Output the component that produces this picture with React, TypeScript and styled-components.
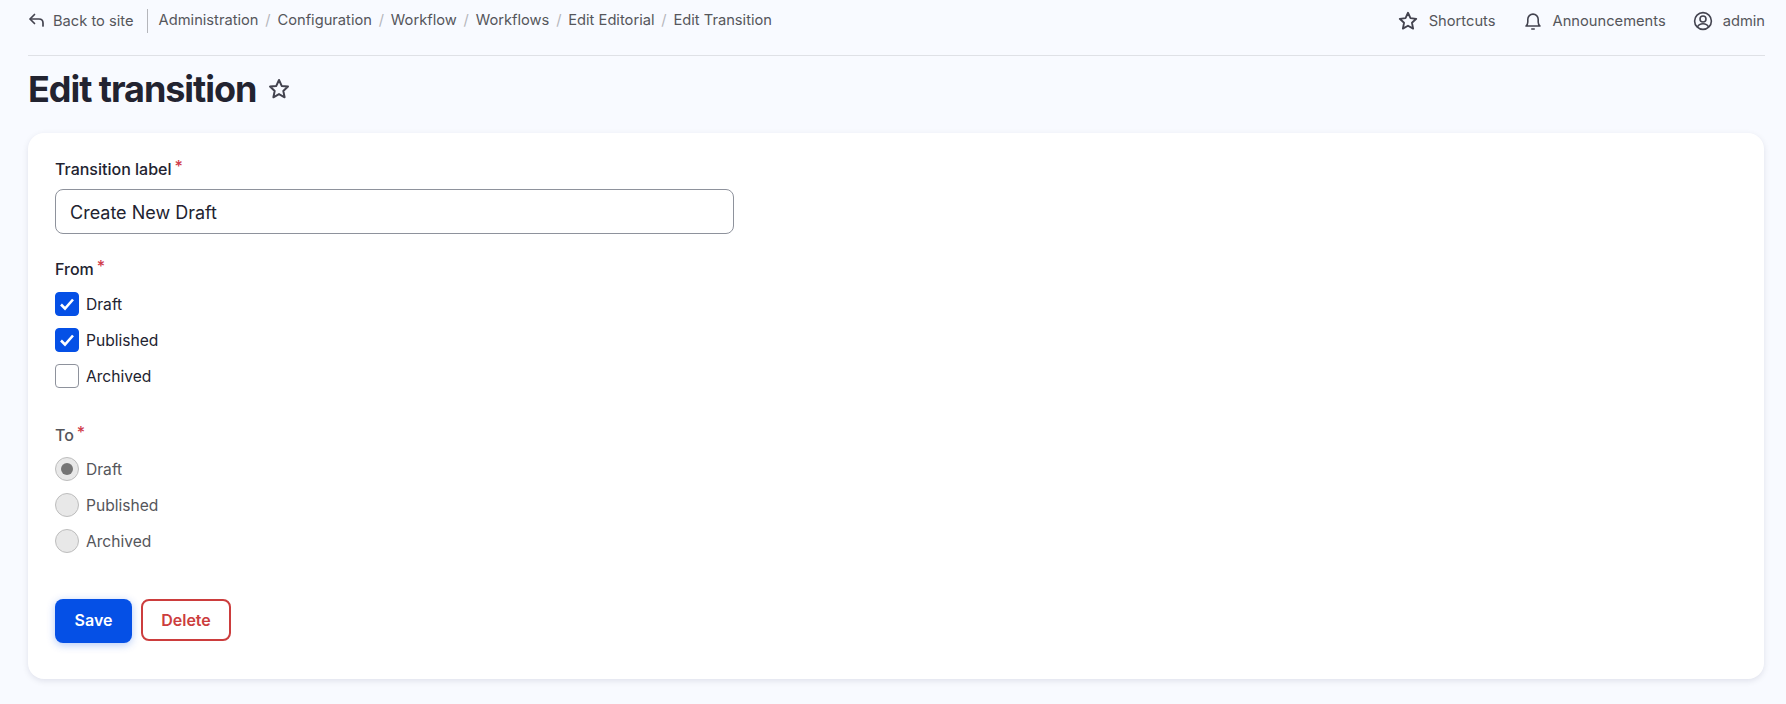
import React from 'react';
import styled, { createGlobalStyle } from 'styled-components';

const GlobalStyle = createGlobalStyle`
  html, body {
    margin: 0;
    padding: 0;
    background: #f8faff;
    font-family: Inter, "Liberation Sans", sans-serif;
    color: #222330;
  }
  * { box-sizing: border-box; }
`;

const StarIcon = ({ size = 20 }: { size?: number }) => (
  <svg width={size} height={size} viewBox="0 0 24 24" fill="none" stroke="#43434f" strokeWidth="2" strokeLinejoin="round">
    <path d="M12 3l2.700 5.900 6.300.7-4.700 4.300 1.300 6.400L12 17.100l-5.600 3.200 1.300-6.400L3 9.600l6.300-.7z" />
  </svg>
);

const CheckMark = () => (
  <svg width="18" height="18" viewBox="0 0 18 18" fill="none" stroke="#fff" strokeWidth="2.600">
    <path d="M3 9.500l4 4 8-9" />
  </svg>
);

export default function App() {
  const crumbs = ['Administration', 'Configuration', 'Workflow', 'Workflows', 'Edit Editorial', 'Edit Transition'];

  return (
    <Page>
      <GlobalStyle />
      <Toolbar>
        <BackLink>
          <svg width="18" height="18" viewBox="0 0 18 18" fill="none" stroke="#43434f" strokeWidth="1.700" strokeLinecap="round" strokeLinejoin="round">
            <path d="M6.500 2.500L2 7l4.500 4.500" />
            <path d="M2.500 7H11c2.500 0 4 1.600 4 4v3" />
          </svg>
          Back to site
        </BackLink>
        <Crumbs>
          {crumbs.map((c, i) => (
            <React.Fragment key={c}>
              {i > 0 && <Slash>/</Slash>}
              <span>{c}</span>
            </React.Fragment>
          ))}
        </Crumbs>
        <Tools>
          <Tool>
            <StarIcon size={22} />
            Shortcuts
          </Tool>
          <Tool>
            <svg width="20" height="20" viewBox="0 0 20 20" fill="none" stroke="#43434f" strokeWidth="1.600" strokeLinejoin="round" strokeLinecap="round">
              <path d="M3 15h14c-1.200-1-1.800-2.200-1.800-4V8.300a5.200 5.200 0 0 0-10.400 0V11c0 1.800-.6 3-1.800 4z" />
              <path d="M8.800 18h2.400" />
            </svg>
            Announcements
          </Tool>
          <Tool>
            <svg width="20" height="20" viewBox="0 0 20 20" fill="none" stroke="#43434f" strokeWidth="1.600">
              <circle cx="10" cy="10" r="8.400" />
              <circle cx="10" cy="8" r="3" />
              <path d="M4.500 16c1-2.300 3-3.200 5.500-3.200s4.500.9 5.500 3.200" />
            </svg>
            admin
          </Tool>
        </Tools>
      </Toolbar>

      <TitleRow>
        <Title>Edit transition</Title>
        <StarIcon size={24} />
      </TitleRow>

      <Card>
        <Label>Transition label<Req>*</Req></Label>
        <TextInput defaultValue="Create New Draft" />

        <GroupLabel>From<Req>*</Req></GroupLabel>
        <Options $top={12}>
          <Option><CheckBox $checked><CheckMark /></CheckBox>Draft</Option>
          <Option><CheckBox $checked><CheckMark /></CheckBox>Published</Option>
          <Option><CheckBox />Archived</Option>
        </Options>

        <GroupLabel $disabled $top={36}>To<Req>*</Req></GroupLabel>
        <Options>
          <Option $disabled><Radio $selected />Draft</Option>
          <Option $disabled><Radio />Published</Option>
          <Option $disabled><Radio />Archived</Option>
        </Options>

        <Actions>
          <SaveButton>Save</SaveButton>
          <DeleteButton>Delete</DeleteButton>
        </Actions>
      </Card>
    </Page>
  );
}

const Page = styled.div`
  width: 1786px;
  height: 704px;
  overflow: hidden;
  padding: 0 21px 0 28px;
`;

const Toolbar = styled.header`
  display: flex;
  align-items: center;
  height: 56px;
  padding-bottom: 14px;
  border-bottom: 1px solid #dfe1e6;
  font-size: 14.700px;
  color: #55565b;
`;

const BackLink = styled.div`
  display: flex;
  align-items: center;
  gap: 7px;
  height: 24px;
  padding-right: 13px;
  border-right: 1px solid #b5b6bb;
`;

const Crumbs = styled.nav`
  display: flex;
  align-items: center;
  margin-left: 11px;
  margin-top: -2px;
`;

const Slash = styled.span`
  margin: 0 6.800px;
  color: #b5b6bb;
`;

const Tools = styled.div`
  display: flex;
  align-items: center;
  gap: 27px;
  margin-left: auto;
`;

const Tool = styled.div`
  display: flex;
  align-items: center;
  gap: 10px;
`;

const TitleRow = styled.div`
  display: flex;
  align-items: center;
  gap: 11px;
  height: 60px;
  margin-top: 3px;
`;

const Title = styled.h1`
  margin: 0;
  font-size: 36px;
  line-height: 44px;
  font-weight: 700;
  letter-spacing: -1.050px;
  color: #222330;
`;

const Card = styled.main`
  margin: 14px 1px 0 0;
  height: 546px;
  padding: 25px 27px;
  background: #fff;
  border-radius: 16px;
  box-shadow: 0 2px 6px rgba(0, 0, 60, 0.1);
`;

const Label = styled.div`
  display: flex;
  height: 22px;
  font-size: 16px;
  line-height: 22px;
  font-weight: 500;
  color: #222330;
`;

const GroupLabel = styled(Label)<{ $disabled?: boolean; $top?: number }>`
  margin-top: ${(p) => p.$top ?? 24}px;
  color: ${(p) => (p.$disabled ? '#55565b' : '#222330')};
`;

const Req = styled.span`
  margin-left: 3px;
  margin-top: -3px;
  color: #d03a4a;
  font-size: 16px;
`;

const TextInput = styled.input`
  display: block;
  width: 679px;
  height: 45px;
  margin-top: 9px;
  padding: 1px 14px 0;
  border: 1px solid #8e929c;
  border-radius: 8px;
  background: #fff;
  outline: none;
  font-family: inherit;
  font-size: 18px;
  color: #222330;
`;

const Options = styled.div<{ $top?: number }>`
  display: flex;
  flex-direction: column;
  gap: 12px;
  margin-top: ${(p) => p.$top ?? 11}px;
`;

const Option = styled.label<{ $disabled?: boolean }>`
  display: flex;
  align-items: center;
  gap: 7px;
  height: 24px;
  font-size: 15.600px;
  color: ${(p) => (p.$disabled ? '#55565b' : '#222330')};
`;

const CheckBox = styled.span<{ $checked?: boolean }>`
  display: flex;
  align-items: center;
  justify-content: center;
  width: 24px;
  height: 24px;
  border-radius: 4px;
  background: ${(p) => (p.$checked ? '#0550e6' : '#fff')};
  border: 1px solid ${(p) => (p.$checked ? '#0550e6' : '#8e929c')};
`;

const Radio = styled.span<{ $selected?: boolean }>`
  display: flex;
  align-items: center;
  justify-content: center;
  width: 24px;
  height: 24px;
  border-radius: 50%;
  background: #e8e8e8;
  border: 1px solid #bdbdbd;

  &::after {
    content: '';
    display: ${(p) => (p.$selected ? 'block' : 'none')};
    width: 12px;
    height: 12px;
    border-radius: 50%;
    background: #757575;
  }
`;

const Actions = styled.div`
  display: flex;
  align-items: flex-start;
  gap: 9px;
  margin-top: 46px;
`;

const SaveButton = styled.button`
  width: 77px;
  height: 44px;
  padding: 0 0 2px;
  border: none;
  border-radius: 8px;
  background: #0550e6;
  box-shadow: 0 2px 8px rgba(5, 80, 230, 0.3);
  color: #fff;
  font-family: inherit;
  font-size: 16px;
  font-weight: 600;
`;

const DeleteButton = styled.button`
  width: 90px;
  height: 42px;
  border: 2px solid #cc3d3d;
  border-radius: 8px;
  background: #fff;
  color: #cc3d3d;
  font-family: inherit;
  font-size: 16px;
  font-weight: 600;
`;
